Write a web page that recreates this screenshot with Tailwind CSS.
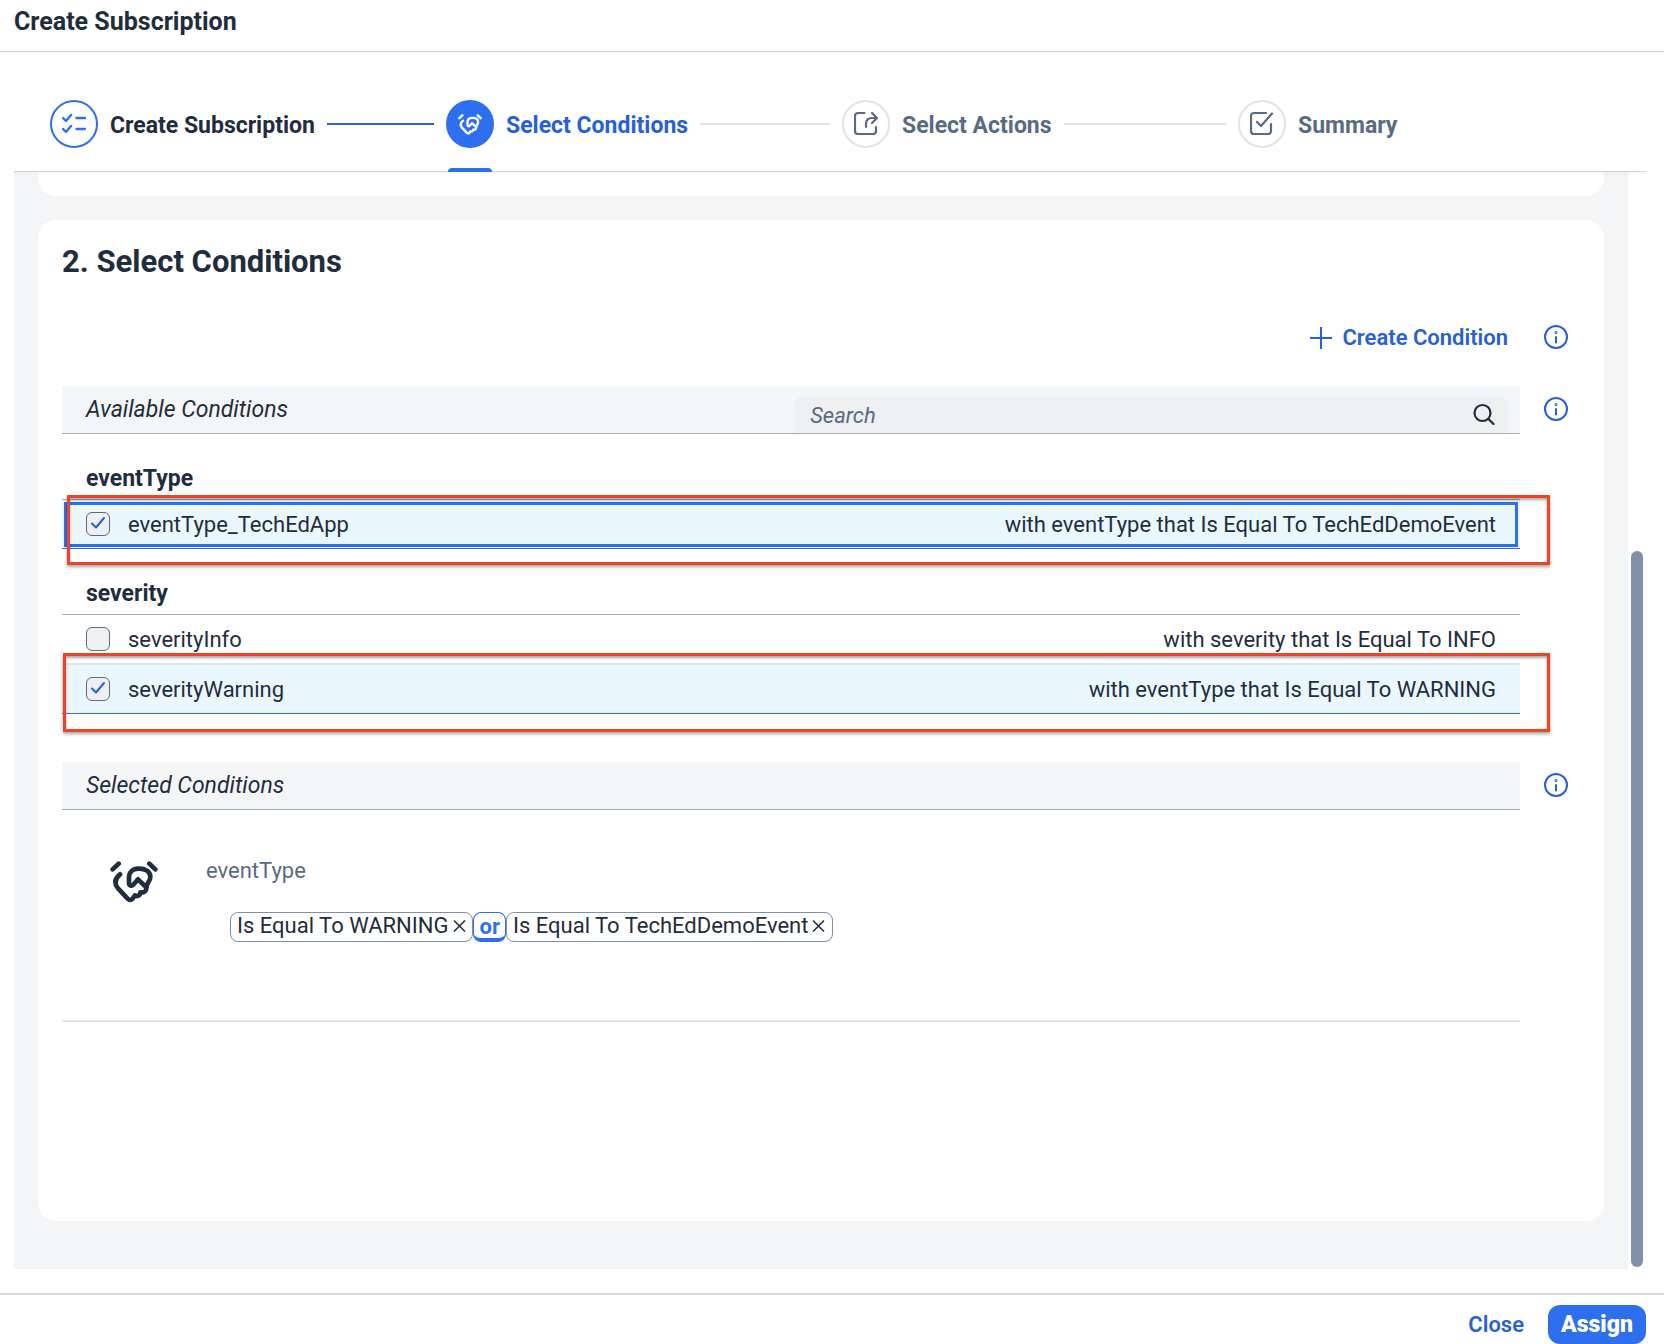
<!DOCTYPE html>
<html lang="en">
<head>
<meta charset="utf-8">
<meta name="viewport" content="width=device-width, initial-scale=1">
<title>Create Subscription</title>
<script src="https://cdn.jsdelivr.net/npm/@tailwindcss/browser@4"></script>
</head>
<body class="bg-white font-['Roboto',sans-serif] text-[22px] leading-7 text-[#1f2d3e]">

<svg class="hidden" aria-hidden="true">
  <symbol id="handshake" viewBox="0 -2 144 132" fill="none" stroke="currentColor" stroke-width="14" stroke-linecap="round" stroke-linejoin="round">
    <path d="M8 29 26 12M118 12l18 17"/>
    <path d="M30 44C14 57 13 72 24 86l28 30c5 6 11 6 16 1l7-10c8 5 16 0 16-9 11 2 19-4 18-15"/>
    <path d="M109 83 84 59 70 75c-5 5-13 3-13-5V53c0-14 10-25 27-26 22-1 37 8 37 25 0 12-10 17-12 31"/>
  </symbol>
  <symbol id="info" viewBox="0 0 24 24" fill="none" stroke="currentColor" stroke-width="2" stroke-linecap="round">
    <circle cx="12" cy="12" r="11"/><path d="M12 12v5.500"/><circle cx="12" cy="7.500" r=".5"/>
  </symbol>
</svg>

<div class="flex min-h-screen flex-col">
  <header class="relative flex h-[52px] items-center border-b border-[#d5d7d9] px-3.5 pb-2 shadow-[0_2px_3px_rgba(0,0,0,0.04)]">
    <h1 class="text-[25px] font-bold">Create Subscription</h1>
  </header>

  <nav class="relative z-10 mr-[18px] ml-3.5 h-[120px] border-b border-[#d5d7d9] pr-3 pl-9 shadow-[0_2px_2px_rgba(0,0,0,0.03)]" aria-label="Wizard progress">
    <ol class="grid h-full grid-cols-4 text-[23px] font-bold">
      <li class="flex items-center gap-3 pt-6 pr-3">
        <span class="flex size-12 shrink-0 items-center justify-center rounded-full border-2 border-[#2d6fee] text-[#2d6fee]">
          <svg class="size-6" viewBox="0 0 24 24" fill="none" stroke="currentColor" stroke-width="2.400" stroke-linecap="round" stroke-linejoin="round"><path d="M1 6l3 3 5-6M1 17l3 3 5-6M14.500 6H23M14.500 17H23"/></svg>
        </span>
        <a href="#step1" class="pt-1 whitespace-nowrap">Create Subscription</a>
        <span class="h-0.5 grow bg-[#2860d8]"></span>
      </li>
      <li class="relative flex items-center gap-3 pt-6 pr-3 text-[#2860d8]">
        <span class="flex size-12 shrink-0 items-center justify-center rounded-full bg-[#2d6fee] text-white">
          <svg class="h-[22px] w-6"><use href="#handshake"/></svg>
        </span>
        <a href="#step2" class="pt-1 whitespace-nowrap" aria-current="step">Select Conditions</a>
        <span class="h-0.5 grow bg-[#e4e4e4]"></span>
        <span class="absolute -bottom-px left-0.5 h-1 w-11 rounded-t-sm bg-[#2d6fee]"></span>
      </li>
      <li class="flex items-center gap-3 pt-6 pr-3 text-[#586b84]">
        <span class="flex size-12 shrink-0 items-center justify-center rounded-full border-2 border-[#e4e4e4] pb-0.5">
          <svg class="size-6" viewBox="0 0 24 24" fill="none" stroke="currentColor" stroke-width="2.200" stroke-linecap="round" stroke-linejoin="round"><path d="M10.500 2H4Q1 2 1 5v15q0 3 3 3h15q3 0 3-3v-4M12 16v-3q0-6 6-6h5M18 2l5 5-5 5"/></svg>
        </span>
        <a href="#step3" class="pt-1 whitespace-nowrap">Select Actions</a>
        <span class="h-0.5 grow bg-[#e4e4e4]"></span>
      </li>
      <li class="flex items-center gap-3 pt-6 text-[#586b84]">
        <span class="flex size-12 shrink-0 items-center justify-center rounded-full border-2 border-[#e4e4e4] pb-0.5">
          <svg class="size-6" viewBox="0 0 24 24" fill="none" stroke="currentColor" stroke-width="2.200" stroke-linecap="round" stroke-linejoin="round"><path d="M16 2H4Q1 2 1 5v15q0 3 3 3h14q3 0 3-3v-7M7 11l4 4L22 2.500"/></svg>
        </span>
        <a href="#step4" class="pt-1 whitespace-nowrap">Summary</a>
      </li>
    </ol>
  </nav>

  <div class="flex grow pr-[21px] pl-3.5">
    <main class="flex grow flex-col bg-[#f4f5f7] px-6 pb-12">
      <div class="h-6 rounded-b-[18px] bg-white"></div>

      <section class="mt-6 grow rounded-[18px] bg-white pr-9 pl-6" aria-labelledby="conditions-title">
        <h2 id="conditions-title" class="pt-[22px] text-[31px] leading-10 font-bold">2. Select Conditions</h2>

        <div class="grid grid-cols-[1fr_24px] gap-x-6">
          <div class="flex h-[104px] items-center justify-end pt-2 pr-3">
            <button class="flex items-center gap-2.5 font-semibold text-[#2860d8]">
              <svg class="size-[22px]" viewBox="0 0 22 22" fill="none" stroke="currentColor" stroke-width="2"><path d="M11 0v22M0 11h22"/></svg>
              Create Condition
            </button>
          </div>
          <button class="pt-[6px] text-[#2860d8]" aria-label="About creating conditions"><svg class="size-6"><use href="#info"/></svg></button>

          <div class="flex h-12 items-center justify-between border-b border-[#a5afbb] bg-[#f4f5f7] pr-3 pl-6">
            <h3 class="text-[23px] italic">Available Conditions</h3>
            <label class="flex h-9 w-[50.2%] items-center self-end rounded-t-lg bg-[#eff0f2] pr-3 pb-px pl-4">
              <input type="search" placeholder="Search" aria-label="Search conditions" class="min-w-0 grow bg-transparent pt-0.5 outline-none placeholder:text-[#586b84] placeholder:italic">
              <svg class="size-6" viewBox="0 0 24 24" fill="none" stroke="currentColor" stroke-width="2.200" stroke-linecap="round"><circle cx="10.500" cy="10" r="8"/><path d="M16.500 16l5 5"/></svg>
            </label>
          </div>
          <button class="h-[46px] text-[#2860d8]" aria-label="About available conditions"><svg class="size-6"><use href="#info"/></svg></button>

          <div>
            <h4 class="flex h-[66px] items-end border-b border-[#a5afbb] pb-[6px] pl-6 text-[23px] font-bold">eventType</h4>
            <ul>
              <li class="relative h-[49px] border-b border-[#2d6fee] bg-[#ebf7fe]">
                <label class="flex h-12 items-center pr-6 pl-6">
                  <span class="relative mr-[18px] flex size-6">
                    <input type="checkbox" checked class="peer size-6 appearance-none rounded-md border border-[#586b84] bg-[#eff0f2]">
                    <svg class="pointer-events-none absolute inset-0 hidden size-6 text-[#2860d8] peer-checked:block" viewBox="0 0 24 24" fill="none" stroke="currentColor" stroke-width="2" stroke-linecap="round" stroke-linejoin="round"><path d="M6 11.500l4 4L18 6"/></svg>
                  </span>
                  <span class="grow pt-0.5">eventType_TechEdApp</span>
                  <span class="pt-0.5">with eventType that Is Equal To TechEdDemoEvent</span>
                </label>
                <span class="pointer-events-none absolute inset-x-0.5 top-0.5 bottom-px border-[3px] border-[#2d6fee]"></span>
                <span class="pointer-events-none absolute -top-[5px] -right-[30px] -bottom-[17px] left-[5px] border-[3px] border-[#ec4426] shadow-[0_2px_3px_rgba(0,0,0,0.35),inset_0_2px_3px_rgba(0,0,0,0.35)]"></span>
              </li>
            </ul>
            <h4 class="flex h-[66px] items-end border-b border-[#a5afbb] pb-[6px] pl-6 text-[23px] font-bold">severity</h4>
            <ul>
              <li class="h-[50px] border-b-2 border-[#e4e4e4]">
                <label class="flex h-12 items-center pr-6 pl-6">
                  <input type="checkbox" class="mr-[18px] size-6 appearance-none rounded-md border border-[#586b84] bg-[#eff0f2]">
                  <span class="grow pt-0.5">severityInfo</span>
                  <span class="pt-0.5">with severity that Is Equal To INFO</span>
                </label>
              </li>
              <li class="relative h-[49px] border-b border-[#2d6fee] bg-[#ebf7fe]">
                <label class="flex h-12 items-center pr-6 pl-6">
                  <span class="relative mr-[18px] flex size-6">
                    <input type="checkbox" checked class="peer size-6 appearance-none rounded-md border border-[#586b84] bg-[#eff0f2]">
                    <svg class="pointer-events-none absolute inset-0 hidden size-6 text-[#2860d8] peer-checked:block" viewBox="0 0 24 24" fill="none" stroke="currentColor" stroke-width="2" stroke-linecap="round" stroke-linejoin="round"><path d="M6 11.500l4 4L18 6"/></svg>
                  </span>
                  <span class="grow pt-0.5">severityWarning</span>
                  <span class="pt-0.5">with eventType that Is Equal To WARNING</span>
                </label>
                <span class="pointer-events-none absolute -top-3 -right-[30px] -bottom-[19px] left-px border-[3px] border-[#ec4426] shadow-[0_2px_3px_rgba(0,0,0,0.35),inset_0_2px_3px_rgba(0,0,0,0.35)]"></span>
              </li>
            </ul>
          </div>
          <div></div>

          <h3 class="mt-12 flex h-12 items-center border-b border-[#a5afbb] bg-[#f4f5f7] pl-6 text-[23px] italic">Selected Conditions</h3>
          <button class="mt-12 h-[46px] text-[#2860d8]" aria-label="About selected conditions"><svg class="size-6"><use href="#info"/></svg></button>

          <div class="flex h-[212px] items-start border-b-2 border-[#e4e4e4] pt-12 pl-12">
            <svg class="h-[46px] w-12 shrink-0"><use href="#handshake"/></svg>
            <div class="pl-12">
              <h4 class="leading-[26px] text-[#586b84]">eventType</h4>
              <div class="flex pt-7 pl-6">
                <span class="flex h-[30px] items-center rounded-lg border border-[#7f90a9] px-1.5 pb-0.5">Is Equal To WARNING<button class="ml-1" aria-label="Remove WARNING"><svg class="size-3.5" viewBox="0 0 14 14" fill="none" stroke="currentColor" stroke-width="1.600"><path d="M2 1.500l11 11M13 1.500l-11 11"/></svg></button></span>
                <button class="flex h-[30px] items-center rounded-lg border border-b-4 border-[#2d6fee] px-[5px] pt-0.5 font-bold text-[#2d6fee]">or</button>
                <span class="flex h-[30px] items-center rounded-lg border border-[#7f90a9] px-1.5 pb-0.5">Is Equal To TechEdDemoEvent<button class="ml-1" aria-label="Remove TechEdDemoEvent"><svg class="size-3.5" viewBox="0 0 14 14" fill="none" stroke="currentColor" stroke-width="1.600"><path d="M1 1.500l11 11M12 1.500l-11 11"/></svg></button></span>
              </div>
            </div>
          </div>
        </div>
      </section>
    </main>
    <div class="ml-[3px] flex w-3 flex-col justify-end pb-0.5" aria-hidden="true">
      <div class="h-[716px] rounded-full bg-[#7f90a9]"></div>
    </div>
  </div>

  <footer class="mt-6 flex h-[51px] items-end justify-end gap-6 border-t-2 border-[#d9d9d9] pr-[18px]">
    <button class="h-[39px] font-semibold text-[#2860d8]">Close</button>
    <button class="h-[39px] min-w-[98px] rounded-xl bg-[#2d6fee] px-3 text-[23px] font-black text-white">Assign</button>
  </footer>
</div>
</body>
</html>
